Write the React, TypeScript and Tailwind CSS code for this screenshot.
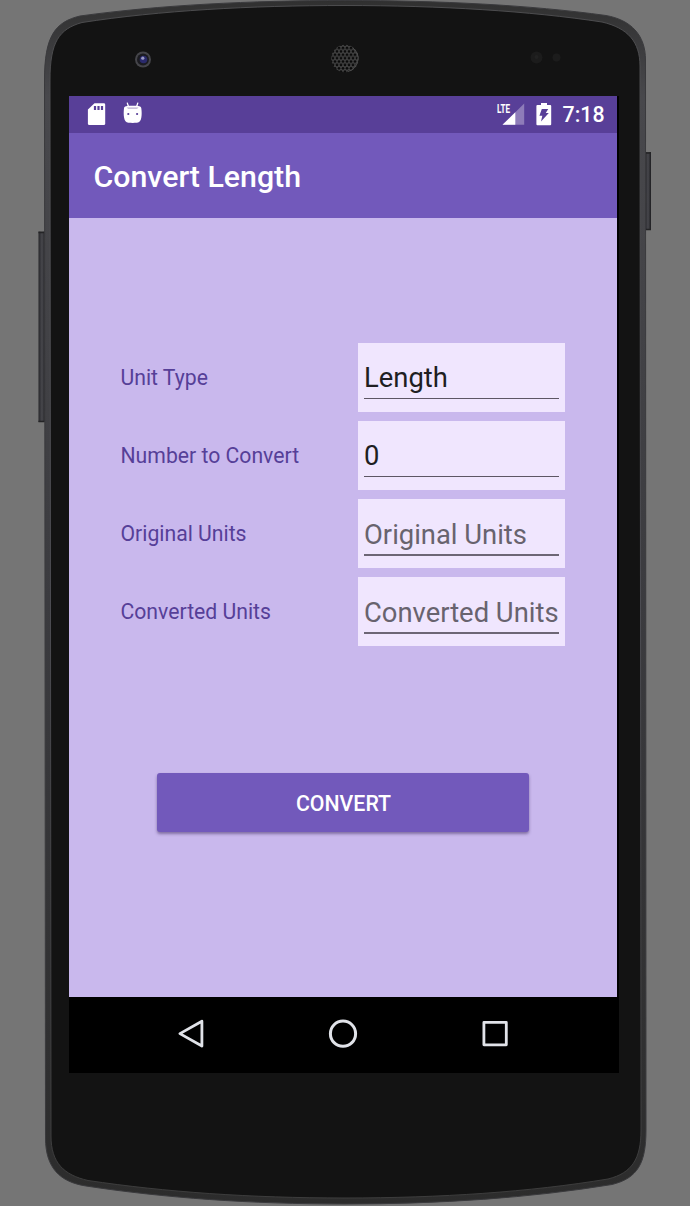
import React from "react";

const BODY =
  "M44.5 80 C44.5 36 55 22 80 16 C160 5 250 .5 345 .5 C440 .5 530 5 606 15.5 C631 20 645.5 35 645.5 60 L646 1130 C646 1163 638 1178 612 1184.5 C530 1198 440 1204 345 1204 C250 1204 165 1198 86 1186 C60 1182 45.5 1168 45.5 1138 Z";
const FACE =
  "M50 80 C50 42 59 29 82 22.5 C160 10.5 250 5.5 345 5.5 C440 5.5 530 11 602 22 C628 28 640 42 640 66 L641 1130 C641 1159 632 1173 608 1179 C530 1192 440 1198 345 1198 C250 1198 165 1192 88 1180.5 C64 1175 51 1163 51 1136 Z";

function DeviceFrame() {
  return (
    <svg className="absolute inset-0" width="690" height="1206" viewBox="0 0 690 1206" aria-hidden="true">
      <defs>
        <linearGradient id="side" x1="0" x2="1" y1="0" y2="0">
          <stop offset="0" stopColor="#26262a" />
          <stop offset=".5" stopColor="#48484d" />
          <stop offset="1" stopColor="#1d1d20" />
        </linearGradient>
        <linearGradient id="rim" x1="0" x2="0" y1="0" y2="1">
          <stop offset="0" stopColor="#303030" />
          <stop offset=".08" stopColor="#48484c" />
          <stop offset=".5" stopColor="#3b3b3f" />
          <stop offset="1" stopColor="#2c2c2c" />
        </linearGradient>
        <linearGradient id="edge" x1="0" x2="0" y1="0" y2="1">
          <stop offset="0" stopColor="#4c4c4e" />
          <stop offset=".5" stopColor="#4c4c52" />
          <stop offset="1" stopColor="#3c3c3c" />
        </linearGradient>
        <pattern id="mesh" x="343" y="56.5" width="4" height="6.8" patternUnits="userSpaceOnUse">
          <rect width="4" height="6.8" fill="#474747" />
          <circle cx="2" cy="1.7" r="1.45" fill="#0a0a0a" />
          <circle cx="0" cy="5.1" r="1.45" fill="#0a0a0a" />
          <circle cx="4" cy="5.1" r="1.45" fill="#0a0a0a" />
        </pattern>
      </defs>
      <rect x="38.5" y="231.5" width="7" height="190.5" fill="url(#side)" />
      <path d="M38.5 232.5h6M38.5 421.5h6" stroke="#242426" strokeWidth="1.5" />
      <rect x="645" y="152" width="6" height="78" fill="url(#side)" />
      <path d="M645 153h6M645 229.5h6" stroke="#242426" strokeWidth="1.5" />
      <path d={BODY} fill="url(#rim)" stroke="#3a3a3d" strokeWidth="1" />
      <path d={FACE} fill="#131313" stroke="url(#edge)" strokeWidth="1" />
      <circle cx="143" cy="59.5" r="8" fill="#45454a" />
      <circle cx="143" cy="59.5" r="6" fill="#1b1b20" />
      <circle cx="143.5" cy="59.5" r="3.8" fill="#2a2a6c" />
      <circle cx="142.8" cy="58.2" r="1.6" fill="#9a9ac4" />
      <circle cx="345" cy="58.5" r="13.8" fill="url(#mesh)" />
      <path d="M353 48 A13.5 13.5 0 0 1 348 71.5" fill="none" stroke="#4c4c4c" strokeWidth="1" />
      <circle cx="536.5" cy="57.5" r="6" fill="#1c1c1c" />
      <circle cx="536.5" cy="57" r="2" fill="#222" />
      <circle cx="556.5" cy="57.5" r="4" fill="#1c1c1c" />
    </svg>
  );
}

function StatusBar() {
  return (
    <div className="flex h-[37px] items-start bg-[#583f98] pl-[18px] pr-[12.5px] pt-[6px] text-white">
      <svg width="19" height="24" viewBox="0 0 19 24" aria-hidden="true">
        <path d="M7.5 1.3H16.8a1.4 1.4 0 0 1 1.4 1.4v19a1.4 1.4 0 0 1-1.4 1.4H2.3a1.4 1.4 0 0 1-1.4-1.4V7.4Z" fill="#fff" />
        <path d="M8 4v4M11.5 4v4M15 4v4" stroke="#583f98" strokeWidth="2.2" />
      </svg>
      <svg className="ml-[17px]" width="20" height="24" viewBox="0 0 20 24" aria-hidden="true">
        <path d="M4.2.6 5.6 5M14.9.6 13.5 5" stroke="#fff" strokeWidth="1.3" />
        <path d="M1 6.2C1.3 4 3.3 3.7 9.7 3.7s8.3.3 8.6 2.5c.5 3.4.5 6.6 0 9.6-.5 3-1.8 4.8-4.3 5-2.8.2-5.8.2-8.6 0-2.5-.2-3.8-2-4.3-5-.5-3-.5-6.2-.1-9.6Z" fill="#fff" />
        <path d="M3.6 5.5h12l-1.5 1.2h-9Z" fill="#b9accf" />
        <circle cx="5.3" cy="12" r="1.1" fill="#583f98" />
        <circle cx="14.1" cy="12" r="1.1" fill="#583f98" />
      </svg>
      <div className="ml-auto flex items-start">
        <div className="relative h-[24px] w-[28px]">
          <svg width="28" height="24" viewBox="0 0 28 24" aria-hidden="true">
            <path d="M5.5 22.8 27.2 1.4V22.8Z" fill="#8e7cb9" />
            <path d="M5.5 22.8 18.3 10.2V22.8Z" fill="#fff" />
          </svg>
          <span className="absolute left-0 top-0 origin-left scale-x-[.6] text-[13.5px] font-bold leading-[13px]">LTE</span>
        </div>
        <svg className="ml-[11px]" width="16" height="24" viewBox="0 0 16 24" aria-hidden="true">
          <path d="M5 1h6v2h3.2a1 1 0 0 1 1 1v18.2a1 1 0 0 1-1 1H1.4a1 1 0 0 1-1-1V4a1 1 0 0 1 1-1H5Z" fill="#fff" />
          <path d="M5.8 7h6.4L9.8 11h3L5 19.6l1.3-5.8H3.4Z" fill="#583f98" />
        </svg>
        <span className="ml-[10.5px] mt-[1px] text-[21.3px] font-medium leading-[24px]">7:18</span>
      </div>
    </div>
  );
}

type FieldProps = { label: string; value: string; hint?: boolean };

function Field({ label, value, hint = false }: FieldProps) {
  return (
    <div className="flex h-[69px] items-center">
      <div className="w-[237.5px] pt-px text-[21.2px] leading-[26px] text-[#563f98]">{label}</div>
      <div className="h-[69px] w-[207px] bg-[#f0e6fe] px-[6px] pt-[18px]">
        <div
          className={
            hint
              ? "h-[39px] whitespace-nowrap border-b-2 border-[#6d6675] pt-px text-[27.4px] leading-[34px] text-[#68636e]"
              : "h-[38px] whitespace-nowrap border-b border-[#5d5664] text-[27.4px] leading-[34px] text-[#201e22]"
          }
        >
          {value}
        </div>
      </div>
    </div>
  );
}

function NavBar() {
  return (
    <div className="flex h-[76px] items-start justify-between bg-black pl-[106px] pr-[110px] pt-[20px]">
      <svg width="30" height="34" viewBox="0 0 30 34" fill="none" stroke="#e1e3e9" strokeWidth="2.8" strokeLinejoin="round" aria-hidden="true">
        <path d="M26.9 4.2 4.9 16.6 26.9 29Z" />
      </svg>
      <svg width="34" height="34" viewBox="0 0 34 34" fill="none" stroke="#e1e3e9" strokeWidth="3" aria-hidden="true">
        <circle cx="17" cy="16.7" r="12.6" />
      </svg>
      <svg width="28" height="34" viewBox="0 0 28 34" fill="none" stroke="#e1e3e9" strokeWidth="2.8" strokeLinejoin="round" aria-hidden="true">
        <rect x="2.9" y="5.4" width="22.4" height="22.4" />
      </svg>
    </div>
  );
}

export default function App() {
  return (
    <div className="relative h-[1206px] w-[690px] overflow-hidden bg-[#757575] pl-[69px] pt-[96px] font-[Roboto,sans-serif]">
      <DeviceFrame />
      <div className="relative w-[550px] bg-black">
        <div className="w-[548px]">
          <StatusBar />
          <div className="flex h-[85px] items-center bg-[#7259bb] pl-[24.5px] pt-[2px] text-[30.3px] font-medium leading-[38px] text-white">
            Convert Length
          </div>
          <div className="flex h-[779px] flex-col bg-[#c9b8ed] pt-[125px]">
            <div className="flex flex-col gap-[9px] pl-[51.5px]">
              <Field label="Unit Type" value="Length" />
              <Field label="Number to Convert" value="0" />
              <Field label="Original Units" value="Original Units" hint />
              <Field label="Converted Units" value="Converted Units" hint />
            </div>
            <button className="ml-[88px] mt-[127px] h-[59px] w-[372px] rounded-[3px] bg-[#7259bb] pl-px pt-[2px] text-[21.3px] font-medium text-white shadow-[0_2px_3px_rgba(60,40,90,0.5)]">
              CONVERT
            </button>
          </div>
        </div>
        <NavBar />
      </div>
    </div>
  );
}
